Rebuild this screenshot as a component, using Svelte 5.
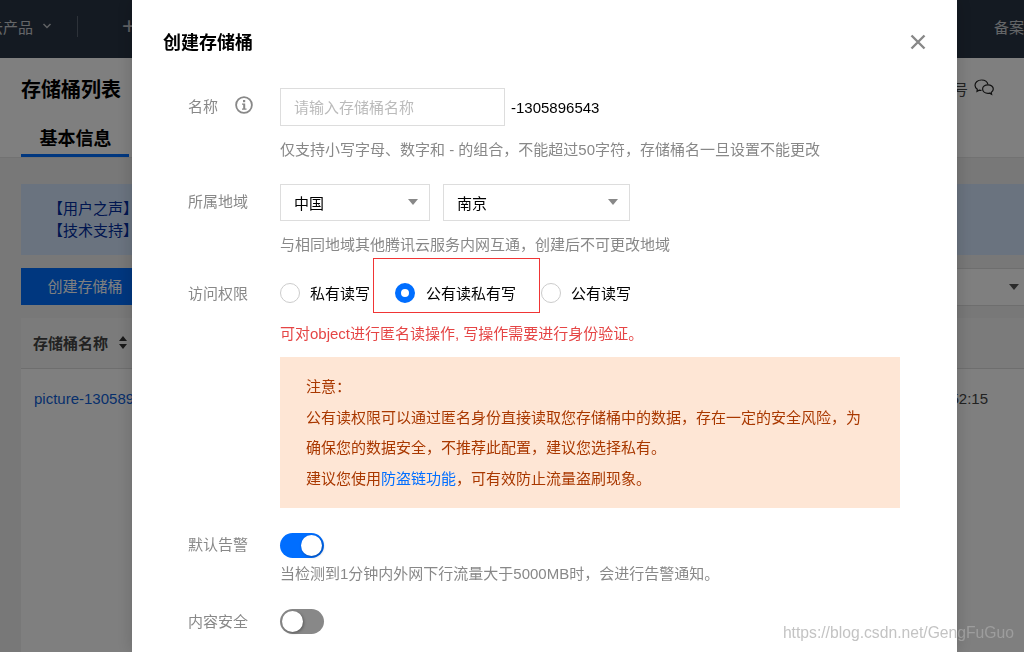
<script>
  let name = "";
  let access = "public-read";
  let alarm = true;
  let contentSafe = false;
</script>

<div class="page">
  <div class="topbar">
    <span class="product">云产品</span>
    <svg class="chev" width="10" height="6" viewBox="0 0 10 6"><path d="M1.500 1l3.500 3.500L8.500 1" fill="none" stroke="#fff" stroke-width="1.500"/></svg>
    <span class="divider"></span>
    <span class="plus">+</span>
    <span class="top-right">备案</span>
  </div>
  <div class="head">
    <div class="head-title">
      <h1>存储桶列表</h1>
      <span class="head-right">
        号
        <svg width="21" height="18" viewBox="0 0 21 18" fill="none" stroke="#222" stroke-width="1.200">
          <path d="M7.500 1C3.900 1 1 3.300 1 6.300c0 1.600 .9 3 2.300 4L3 12.300l2.200-1.200c.7.200 1.500.3 2.300.3"/>
          <path d="M7.500 1c3.200 0 5.900 1.900 6.400 4.400"/>
          <path d="M14 5.800c-3 0-5.400 1.900-5.400 4.300s2.400 4.300 5.400 4.300c.6 0 1.200-.1 1.700-.2l1.900 1.100-.4-1.800c1.300-.8 2.100-2 2.100-3.400 0-2.400-2.400-4.300-5.300-4.300z"/>
        </svg>
      </span>
    </div>
    <div class="tabs"><span class="tab">基本信息</span></div>
  </div>
  <div class="content">
    <div class="banner">
      <div>【用户之声】</div>
      <div>【技术支持】</div>
    </div>
    <div class="toolbar">
      <button class="create">创建存储桶</button>
      <div class="filter"><span class="arrow dark"></span></div>
    </div>
    <div class="table">
      <div class="thead">
        <span>存储桶名称</span>
        <svg width="10" height="13" viewBox="0 0 10 13"><path d="M5 0l4 5H1zM5 13L1 8h8z" fill="#333"/></svg>
      </div>
      <div class="trow">
        <a href="#bucket">picture-1305896543</a>
        <span class="time">2021-03-12 12:52:15</span>
      </div>
    </div>
  </div>
</div>

<div class="overlay">
  <div class="modal">
    <div class="modal-head">
      <h2>创建存储桶</h2>
      <svg class="close" width="16" height="16" viewBox="0 0 16 16"><path d="M1.500 1.500l13 13M14.500 1.500l-13 13" stroke="#888" stroke-width="2.400" fill="none"/></svg>
    </div>

    <div class="row r-name">
      <div class="label">
        名称
        <svg class="info" width="18" height="18" viewBox="0 0 18 18">
          <circle cx="9" cy="9" r="7.900" fill="none" stroke="#888" stroke-width="1.800"/>
          <path d="M7 7.500h3.200v5H11.500v1.300h-4.500v-1.300h1.200v-3.700H7z" fill="#888"/>
          <rect x="8" y="4" width="2.200" height="2.200" fill="#888"/>
        </svg>
      </div>
      <div class="field">
        <div class="inline">
          <input bind:value={name} placeholder="请输入存储桶名称" />
          <span class="suffix">-1305896543</span>
        </div>
        <p class="hint h-name">仅支持小写字母、数字和 - 的组合，不能超过50字符，存储桶名一旦设置不能更改</p>
      </div>
    </div>

    <div class="row r-region">
      <div class="label">所属地域</div>
      <div class="field">
        <div class="inline selects">
          <div class="select s1">中国<span class="arrow"></span></div>
          <div class="select s2">南京<span class="arrow"></span></div>
        </div>
        <p class="hint h-region">与相同地域其他腾讯云服务内网互通，创建后不可更改地域</p>
      </div>
    </div>

    <div class="row r-access">
      <div class="label">访问权限</div>
      <div class="field">
        <div class="radios">
          <button class="radio r1" class:on={access === "private"} on:click={() => (access = "private")}><i></i><span>私有读写</span></button>
          <button class="radio r2" class:on={access === "public-read"} on:click={() => (access = "public-read")}><i></i><span>公有读私有写</span></button>
          <button class="radio r3" class:on={access === "public"} on:click={() => (access = "public")}><i></i><span>公有读写</span></button>
          <span class="mark"></span>
        </div>
        <p class="error">可对object进行匿名读操作, 写操作需要进行身份验证。</p>
        <div class="notice">
          <p>注意：</p>
          <p>公有读权限可以通过匿名身份直接读取您存储桶中的数据，存在一定的安全风险，为确保您的数据安全，不推荐此配置，建议您选择私有。</p>
          <p>建议您使用<a href="#referer">防盗链功能</a>，可有效防止流量盗刷现象。</p>
        </div>
      </div>
    </div>

    <div class="row r-alarm">
      <div class="label">默认告警</div>
      <div class="field">
        <button class="toggle" class:on={alarm} on:click={() => (alarm = !alarm)} aria-label="默认告警"><i></i></button>
        <p class="hint h-alarm">当检测到1分钟内外网下行流量大于5000MB时，会进行告警通知。</p>
      </div>
    </div>

    <div class="row r-safe">
      <div class="label">内容安全</div>
      <div class="field">
        <button class="toggle" class:on={contentSafe} on:click={() => (contentSafe = !contentSafe)} aria-label="内容安全"><i></i></button>
      </div>
    </div>
  </div>
  <span class="watermark">https://blog.csdn.net/GengFuGuo</span>
</div>

<style>
  :global(body) {
    margin: 0;
    overflow: hidden;
    font-family: "Liberation Sans", "Noto Sans CJK SC", sans-serif;
    font-size: 15px;
  }

  .page {
    height: 652px;
    overflow: hidden;
    background: #f0f0f0;
    color: #000;
    display: flex;
    flex-direction: column;
  }
  .topbar {
    flex: none;
    height: 58px;
    box-sizing: border-box;
    padding-bottom: 6px;
    background: #283444;
    color: #fff;
    display: flex;
    align-items: center;
  }
  .product { margin-left: -12px; opacity: .75; }
  .chev { margin-left: 9px; opacity: .7; }
  .divider { width: 1px; height: 21px; background: #5b6573; margin-left: 25px; }
  .plus { margin-left: 44px; font-size: 24px; opacity: .7; }
  .top-right { margin-left: auto; opacity: .75; white-space: nowrap; margin-right: 0; }

  .head { flex: none; background: #fff; height: 100px; padding: 0 21px; border-bottom: 1px solid #e5e5e5; box-sizing: border-box; }
  .head-title { display: flex; justify-content: space-between; align-items: center; height: 60px; }
  h1 { margin: 0; font-size: 20px; font-weight: 700; }
  .head-right { display: flex; align-items: center; gap: 6px; color: #444; margin-right: 8px; }
  .tabs { display: flex; }
  .tab {
    width: 108px;
    height: 39px;
    line-height: 42px;
    padding-left: 1px;
    box-sizing: border-box;
    text-align: center;
    font-size: 18px;
    font-weight: 700;
    border-bottom: 3px solid #006eff;
  }

  .content { flex: 1; display: flex; flex-direction: column; padding: 26px 0 0 21px; }
  .banner {
    height: 71px;
    flex: none;
    box-sizing: border-box;
    padding: 14px 27px;
    background: #d5e7ff;
    color: #002da0;
    line-height: 22px;
  }
  .toolbar { flex: none; display: flex; justify-content: space-between; margin-top: 13px; }
  .create {
    width: 128px;
    height: 37px;
    padding: 0 0 2px 0;
    border: 0;
    background: #006eff;
    color: #fff;
    font: inherit;
  }
  .filter {
    width: 200px;
    height: 38px;
    box-sizing: border-box;
    background: #fff;
    border: 1px solid #ddd;
    border-right: 0;
    display: flex;
    justify-content: flex-end;
    align-items: center;
    padding-right: 5px;
  }
  .table { flex: 1; display: flex; flex-direction: column; margin-top: 12px; background: #fff; }
  .thead {
    height: 51px;
    flex: none;
    display: flex;
    align-items: center;
    gap: 10px;
    padding: 0 0 2px 12px;
    box-sizing: border-box;
    background: #f7f7f7;
    border-bottom: 1px solid #ddd;
    font-weight: 700;
    color: #444;
  }
  .trow {
    flex: 1;
    display: flex;
    justify-content: space-between;
    padding: 21px 36px 0 13px;
    box-sizing: border-box;
    background: #fff;
    color: #444;
  }
  .trow a { color: #0f5fd8; text-decoration: none; }

  .overlay {
    position: fixed;
    inset: 0;
    background: rgba(0, 0, 0, .5);
    overflow: hidden;
  }
  .modal {
    width: 825px;
    height: 652px;
    margin-left: 132px;
    background: #fff;
    box-sizing: border-box;
    overflow: hidden;
    color: #888;
    box-shadow: 0 0 16px rgba(0, 0, 0, .18);
  }
  .modal-head {
    height: 84px;
    padding: 0 31px;
    display: flex;
    justify-content: space-between;
    align-items: center;
  }
  h2 { margin: -2px 0 0; font-size: 18px; font-weight: 700; color: #000; }

  .row { display: flex; padding-left: 56px; }
  .label { width: 92px; flex: none; display: flex; align-items: flex-start; line-height: 20px; }
  .info { margin-left: 17px; margin-top: -1px; }
  .field { flex: 1; }
  .inline { display: flex; align-items: center; }
  p { margin: 0; }
  .hint { line-height: 20px; }

  .r-name { padding-top: 4px; }
  .r-name .label { padding-top: 9px; }
  input {
    width: 225px;
    height: 38px;
    box-sizing: border-box;
    border: 1px solid #ddd;
    padding: 0 13px;
    font: inherit;
    outline: none;
  }
  input::placeholder { color: #bbb; }
  .suffix { margin-left: 6px; color: #000; }
  .h-name { margin-top: 14px; }

  .r-region { margin-top: 24px; }
  .r-region .label { padding-top: 8px; }
  .selects { gap: 13px; }
  .select {
    height: 37px;
    box-sizing: border-box;
    border: 1px solid #ddd;
    padding: 0 11px 1px 13px;
    display: flex;
    align-items: center;
    justify-content: space-between;
    color: #000;
  }
  .s1 { width: 150px; }
  .s2 { width: 187px; }
  .arrow {
    width: 0;
    height: 0;
    border-left: 5px solid transparent;
    border-right: 5px solid transparent;
    border-top: 6px solid #888;
  }
  .arrow.dark { border-top-color: #555; }
  .h-region { margin-top: 14px; }

  .r-access { margin-top: 25px; }
  .r-access .label { padding-top: 4px; }
  .radios { position: relative; display: flex; align-items: center; height: 26px; }
  .radio {
    display: flex;
    align-items: center;
    padding: 0;
    border: 0;
    background: none;
    font: inherit;
    color: #000;
    gap: 10px;
  }
  .radio span { margin-top: -2px; }
  .r2 { margin-left: 25px; gap: 11px; }
  .r3 { margin-left: 25px; }
  .radio i {
    width: 20px;
    height: 20px;
    box-sizing: border-box;
    border: 1px solid #ccc;
    border-radius: 50%;
    background: #fff;
  }
  .radio.on i { border: 6px solid #006eff; }
  .mark {
    position: absolute;
    left: 93px;
    top: -22px;
    width: 167px;
    height: 55px;
    box-sizing: border-box;
    border: 1px solid #f03535;
    pointer-events: none;
  }
  .error { margin-top: 18px; color: #e54545; line-height: 20px; }
  .notice {
    margin-top: 13px;
    width: 620px;
    height: 151px;
    box-sizing: border-box;
    padding: 15px 26px;
    background: #fee6d5;
    color: #a93800;
    line-height: 30.7px;
  }
  .notice a { color: #006eff; text-decoration: none; }

  .r-alarm { margin-top: 25px; }
  .r-alarm .label { padding-top: 2px; }
  .toggle {
    display: flex;
    align-items: center;
    width: 44px;
    height: 25px;
    padding: 0 2px;
    border: 0;
    border-radius: 13px;
    background: #888;
  }
  .toggle i {
    width: 21px;
    height: 21px;
    border-radius: 50%;
    background: #fff;
    box-shadow: 1px 1px 3px rgba(0, 0, 0, .35);
  }
  .toggle.on { background: #006eff; justify-content: flex-end; }
  .h-alarm { margin-top: 6px; }

  .r-safe { margin-top: 25px; }
  .r-safe .label { padding-top: 3px; }

  .watermark {
    position: absolute;
    right: 10px;
    top: 624px;
    color: rgba(170, 170, 170, .7);
    font-size: 15.7px;
  }
</style>
